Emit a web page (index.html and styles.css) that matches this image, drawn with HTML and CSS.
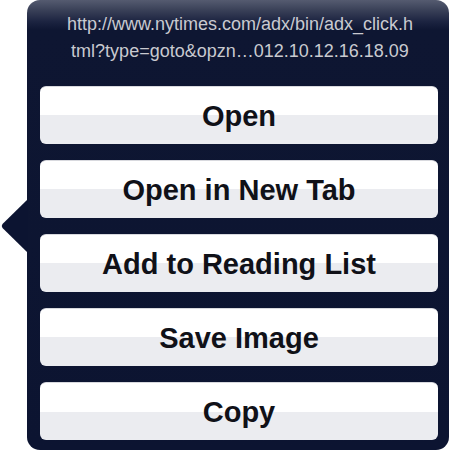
FILE: index.html
```html
<!DOCTYPE html>
<html>
<head>
<meta charset="utf-8">
<link rel="stylesheet" href="styles.css">
</head>
<body>
<div class="popover">
  <svg class="arrow" width="28" height="54" viewBox="0 0 28 54">
    <path d="M28 0 L2.5 25 Q1 27 2.5 29 L28 54 Z" fill="#0c1431"/>
  </svg>
  <div class="panel">
    <div class="url">
      <div>http://www.nytimes.com/adx/bin/adx_click.h</div>
      <div>tml?type=goto&amp;opzn…012.10.12.16.18.09</div>
    </div>
    <div class="buttons">
      <div class="btn">Open</div>
      <div class="btn">Open in New Tab</div>
      <div class="btn">Add to Reading List</div>
      <div class="btn">Save Image</div>
      <div class="btn">Copy</div>
    </div>
  </div>
</div>
</body>
</html>
```
FILE: styles.css
```css
html, body {
  margin: 0;
  padding: 0;
  background: #ffffff;
}
.popover {
  position: relative;
  width: 450px;
  height: 451px;
  display: flex;
}
.arrow {
  position: absolute;
  left: 0;
  top: 199px;
}
.panel {
  margin-left: 27px;
  width: 422px;
  height: 450px;
  box-sizing: border-box;
  border-radius: 13px;
  background: linear-gradient(to bottom, #555b70 0px, #3a4158 10px, #1b2340 22px, #0e1632 30px, #0c1431 100%);
  padding: 11px 11px 10px 13px;
  display: flex;
  flex-direction: column;
}
.url {
  font-family: "Liberation Sans", Arial, sans-serif;
  font-size: 18px;
  line-height: 27px;
  color: #c9cad0;
  text-align: center;
  height: 62px;
  margin-left: 2px;
}
.buttons {
  display: flex;
  flex-direction: column;
  gap: 16px;
  margin-top: 13px;
}
.btn {
  height: 58px;
  box-sizing: border-box;
  border-radius: 6px;
  background: linear-gradient(to bottom, #ffffff 0%, #ffffff 50%, #ebecf0 50%, #ebecf0 100%);
  border-top: 1px solid #d8d9de;
  display: flex;
  align-items: center;
  justify-content: center;
  padding-top: 2px;
  font-family: "Liberation Sans", Arial, sans-serif;
  font-weight: bold;
  font-size: 29px;
  color: #101118;
}
```
